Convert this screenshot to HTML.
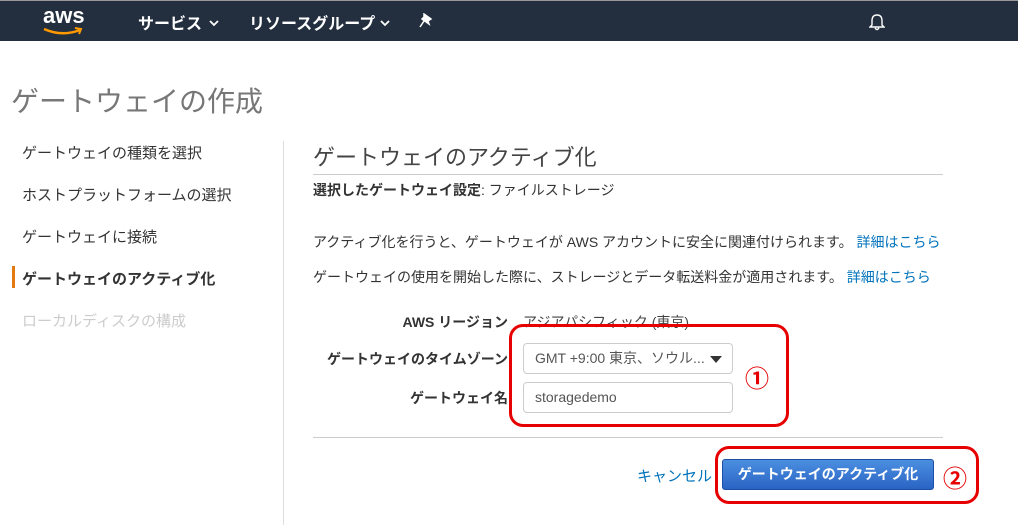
<!DOCTYPE html>
<html><head><meta charset="utf-8"><style>
body{margin:0;width:1018px;height:525px;overflow:hidden;background:#fff;font-family:"Liberation Sans","Noto Sans CJK JP",sans-serif;color:#333;position:relative}
.a{position:absolute;white-space:nowrap}
.top{position:absolute;left:0;top:0;width:1018px;height:41px;background:#232f3e;border-top:1px solid #999;box-sizing:border-box}
.nav{color:#fff;font-weight:bold;font-size:16px;top:9px}
.side{font-size:15px;color:#333;left:22px}
.lbl{font-size:14px;font-weight:bold;text-align:right;right:0}
.box{position:absolute;border:1px solid #ccc;border-radius:4px;background:#fff;font-size:14px;color:#555;box-sizing:border-box;padding-left:11px;line-height:28px}
.red{position:absolute;border:3px solid #e60000;border-radius:14px;box-sizing:border-box}
.num{color:#e60000;font-size:24px;font-weight:bold;font-family:"Noto Sans CJK JP",sans-serif}
</style></head><body>
<div class="top">
 <div class="a" style="left:43px;top:2px;color:#fff;font-size:22px;font-weight:bold">aws</div>
 <svg class="a" style="left:42px;top:26px" width="42" height="9"><path d="M2 2 Q20 10 38 3" stroke="#f90" stroke-width="2.5" fill="none"/><path d="M33 1 L39 2 L37 7" stroke="#f90" stroke-width="2" fill="none"/></svg>
 <div class="a nav" style="left:138px">サービス</div>
 <svg class="a" style="left:209px;top:19px" width="10" height="7"><path d="M1 1 L5 5 L9 1" stroke="#fff" stroke-width="1.8" fill="none"/></svg>
 <div class="a nav" style="left:249px">リソースグループ</div>
 <svg class="a" style="left:380px;top:19px" width="10" height="7"><path d="M1 1 L5 5 L9 1" stroke="#fff" stroke-width="1.8" fill="none"/></svg>
 <svg class="a" style="left:419px;top:12px" width="14" height="16"><path d="M5 1 L12 6 L9 8 L10 11 L3 6 L5 4 Z M5 8 L1 14" stroke="#fff" stroke-width="1.5" fill="#fff"/></svg>
 <svg class="a" style="left:869px;top:12px" width="16" height="18"><path d="M8 2 C4 2 3 5 3 8 L3 12 L1 14 L15 14 L13 12 L13 8 C13 5 12 2 8 2 Z M6 15 Q8 18 10 15" stroke="#fff" stroke-width="1.4" fill="none"/></svg>
</div>
<div class="a" style="left:11px;top:80px;font-size:28px;color:#777">ゲートウェイの作成</div>
<div class="a side" style="top:142px">ゲートウェイの種類を選択</div>
<div class="a side" style="top:184px">ホストプラットフォームの選択</div>
<div class="a side" style="top:226px">ゲートウェイに接続</div>
<div class="a" style="left:12px;top:266px;width:3px;height:22px;background:#e47911"></div>
<div class="a side" style="top:268px;font-weight:bold">ゲートウェイのアクティブ化</div>
<div class="a side" style="top:310px;color:#ccc">ローカルディスクの構成</div>
<div class="a" style="left:283px;top:141px;width:1px;height:384px;background:#ddd"></div>
<div class="a" style="left:313px;top:140px;font-size:22px;color:#444">ゲートウェイのアクティブ化</div>
<div class="a" style="left:313px;top:174px;width:630px;height:1px;background:#ccc"></div>
<div class="a" style="left:313px;top:180px;font-size:14px"><b>選択したゲートウェイ設定</b>: ファイルストレージ</div>
<div class="a" style="left:313px;top:232px;font-size:14px">アクティブ化を行うと、ゲートウェイが AWS アカウントに安全に関連付けられます。 <span style="color:#0073bb">詳細はこちら</span></div>
<div class="a" style="left:313px;top:267px;font-size:14px">ゲートウェイの使用を開始した際に、ストレージとデータ転送料金が適用されます。 <span style="color:#0073bb">詳細はこちら</span></div>
<div class="a" style="left:300px;top:312px;width:208px;height:20px"><div class="a lbl">AWS リージョン</div></div>
<div class="a" style="left:523px;top:312px;font-size:14px;color:#444">アジアパシフィック (東京)</div>
<div class="a" style="left:300px;top:349px;width:208px;height:20px"><div class="a lbl">ゲートウェイのタイムゾーン</div></div>
<div class="box" style="left:523px;top:343px;width:210px;height:31px">GMT +9:00 東京、ソウル...<svg style="position:absolute;right:10px;top:12px" width="12" height="7"><path d="M0 0 L12 0 L6 7 Z" fill="#333"/></svg></div>
<div class="a" style="left:300px;top:388px;width:208px;height:20px"><div class="a lbl">ゲートウェイ名</div></div>
<div class="box" style="left:523px;top:382px;width:210px;height:31px">storagedemo</div>
<div class="red" style="left:509px;top:324px;width:280px;height:103px"></div>
<div class="a num" style="left:745px;top:359px">①</div>
<div class="a" style="left:313px;top:437px;width:630px;height:1px;background:#ccc"></div>
<div class="a" style="left:637px;top:465px;font-size:15px;color:#0073bb">キャンセル</div>
<div class="a" style="left:722px;top:459px;width:212px;height:31px;border-radius:3px;background:linear-gradient(#4b8fe0,#2a64c4);border:1px solid #1d4fa6;box-sizing:border-box;color:#fff;font-weight:bold;font-size:14px;text-align:center;line-height:29px">ゲートウェイのアクティブ化</div>
<div class="red" style="left:715px;top:446px;width:264px;height:58px"></div>
<div class="a num" style="left:943px;top:459px">②</div>
</body></html>
